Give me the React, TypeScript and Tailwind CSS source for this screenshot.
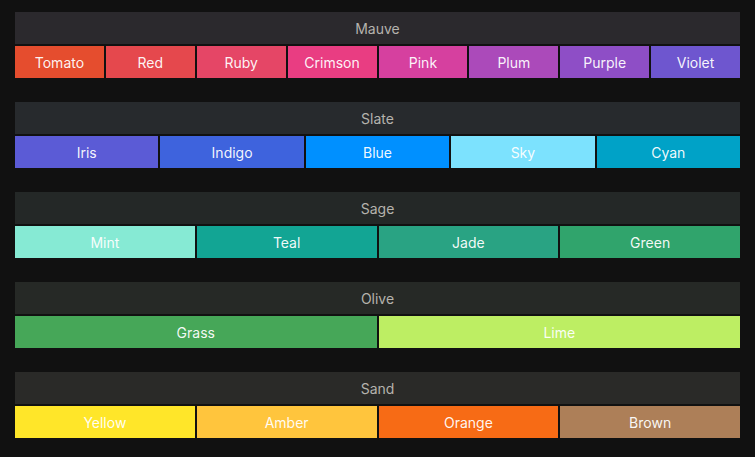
import React from 'react';

const groups: { name: string; bg: string; colors: [string, string][] }[] = [
  { name: 'Mauve', bg: 'bg-[#2b292d]', colors: [['Tomato', 'bg-[#e54d2e]'], ['Red', 'bg-[#e5484d]'], ['Ruby', 'bg-[#e54666]'], ['Crimson', 'bg-[#e93d82]'], ['Pink', 'bg-[#d6409f]'], ['Plum', 'bg-[#ab4aba]'], ['Purple', 'bg-[#8e4ec6]'], ['Violet', 'bg-[#6e56cf]']] },
  { name: 'Slate', bg: 'bg-[#272a2d]', colors: [['Iris', 'bg-[#5b5bd6]'], ['Indigo', 'bg-[#3e63dd]'], ['Blue', 'bg-[#0090ff]'], ['Sky', 'bg-[#7ce2fe]'], ['Cyan', 'bg-[#00a2c7]']] },
  { name: 'Sage', bg: 'bg-[#242827]', colors: [['Mint', 'bg-[#86ead4]'], ['Teal', 'bg-[#12a594]'], ['Jade', 'bg-[#29a383]'], ['Green', 'bg-[#30a46c]']] },
  { name: 'Olive', bg: 'bg-[#262926]', colors: [['Grass', 'bg-[#46a758]'], ['Lime', 'bg-[#bdee63]']] },
  { name: 'Sand', bg: 'bg-[#2a2a28]', colors: [['Yellow', 'bg-[#ffe629]'], ['Amber', 'bg-[#ffc53d]'], ['Orange', 'bg-[#f76b15]'], ['Brown', 'bg-[#ad7f58]']] },
];

export default function App() {
  return (
    <div className="min-h-[457px] bg-[#111111] px-[15px] pt-3 flex flex-col gap-6 text-[14px]" style={{ fontFamily: 'Inter, "Liberation Sans", sans-serif' }}>
      {groups.map((g) => (
        <div key={g.name} className="flex flex-col gap-[2px]">
          <div className={`${g.bg} h-8 flex items-center justify-center text-[#b5b3ad]`}>{g.name}</div>
          <div className="flex gap-[2px] h-8">
            {g.colors.map(([n, c]) => (
              <div key={n} className={`${c} flex-1 flex items-center justify-center text-white/95`}>{n}</div>
            ))}
          </div>
        </div>
      ))}
    </div>
  );
}
